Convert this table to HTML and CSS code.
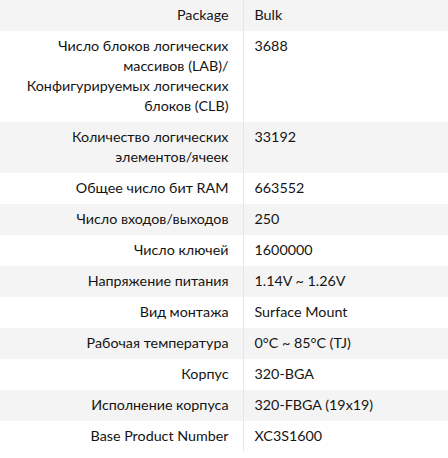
FILE: index.html
```html
<!DOCTYPE html>
<html lang="ru">
<head>
<meta charset="utf-8">
<title>Характеристики</title>
<link rel="stylesheet" href="styles.css">
</head>
<body>
<table class="specs">
  <tbody>
    <tr><th>Package</th><td>Bulk</td></tr>
    <tr><th>Число блоков логических массивов (LAB)/ Конфигурируемых логических блоков (CLB)</th><td>3688</td></tr>
    <tr><th>Количество логических элементов/ячеек</th><td>33192</td></tr>
    <tr><th>Общее число бит RAM</th><td>663552</td></tr>
    <tr><th>Число входов/выходов</th><td>250</td></tr>
    <tr><th>Число ключей</th><td>1600000</td></tr>
    <tr><th>Напряжение питания</th><td>1.14V ~ 1.26V</td></tr>
    <tr><th>Вид монтажа</th><td>Surface Mount</td></tr>
    <tr><th>Рабочая температура</th><td>0°C ~ 85°C (TJ)</td></tr>
    <tr><th>Корпус</th><td>320-BGA</td></tr>
    <tr><th>Исполнение корпуса</th><td>320-FBGA (19x19)</td></tr>
    <tr><th>Base Product Number</th><td>XC3S1600</td></tr>
  </tbody>
</table>
</body>
</html>
```

FILE: styles.css
```css
html, body {
  margin: 0;
  padding: 0;
  background: #ffffff;
}

body {
  font-family: Lato, "Open Sans", sans-serif;
  font-size: 14.3px;
  line-height: 20px;
  color: #141414;
}

.specs {
  width: 448px;
  border-collapse: collapse;
  border-spacing: 0;
}

.specs tr:nth-child(odd) {
  background: #f4f4f4;
}

.specs th,
.specs td {
  padding: 5px 0 6px;
  vertical-align: top;
  font-weight: 400;
}

.specs th {
  box-sizing: border-box;
  width: 243px;
  padding-left: 12px;
  padding-right: 14px;
  text-align: right;
  border-right: 1px solid #e6e6e6;
}

.specs td {
  padding-left: 11px;
  text-align: left;
}
```
